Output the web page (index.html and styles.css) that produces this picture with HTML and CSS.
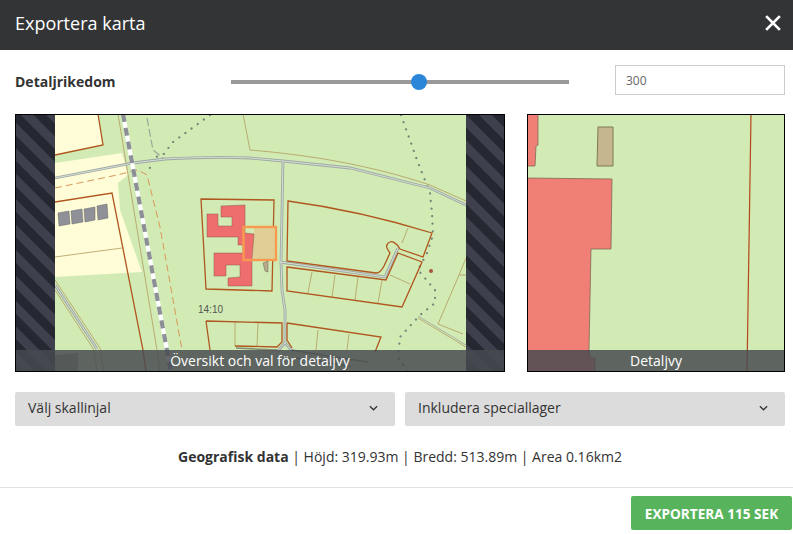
FILE: index.html
```html
<!DOCTYPE html>
<html lang="sv">
<head>
<meta charset="utf-8">
<title>Exportera karta</title>
<link rel="stylesheet" href="styles.css">
</head>
<body>
<div class="modal">
  <header class="head">
    <h1 class="title">Exportera karta</h1>
    <svg class="close" viewBox="0 0 14 14"><path d="M1 1L13 13M13 1L1 13"/></svg>
  </header>
  <section class="detail">
    <span class="detail-label">Detaljrikedom</span>
    <div class="slider"><span class="thumb"></span></div>
    <input class="detail-input" value="300">
  </section>
  <section class="maps">
    <figure class="map map-main">
      <svg class="map-svg" viewBox="15 114 490 258">
        <defs>
          <pattern id="hatch" width="18" height="18" patternUnits="userSpaceOnUse" patternTransform="rotate(45) translate(0 12.6)">
            <rect width="18" height="18" fill="#3e404d"/>
            <rect width="18" height="9" fill="#262831"/>
          </pattern>
        </defs>
        <rect x="15" y="114" width="490" height="258" fill="#d2ebb4"/>
        <g class="cream">
          <path d="M55 114H98L103 145L55 155Z"/>
          <path d="M55 163L122 153L128 175L118 183L120 210L142 272L55 277Z"/>
        </g>
        <g class="thin">
          <path d="M55 257L122 248"/>
          <path d="M312 272L308 293M335 275L332 297M358 277L355 300M382 280L378 303M390 275L410 284M408 228L402 243"/>
          <path d="M235 322L235 346M258 323L257 347M318 330L316 350M349 334L347 350"/>
          <path d="M466 258L459 275L438 324L463 334M459 275H466"/>
          <path d="M118 114L157 350L160 372"/>
          <path d="M243 114L250 150C310 155 370 165 430 185L466 201"/>
          <path d="M55 280L100 348L104 372M55 290L94 350L97 372"/>
          <path d="M418 318L466 347"/>
        </g>
        <path class="dash-orange" d="M55 188L117 175L138 170L147 175L160 227L182 350"/>
        <path class="dash-grey" d="M147 118L153 150L163 158"/>
        <path class="dots" d="M401 115L417 160L430 193L432 213L433 235L427 253L418 270L435 290L435 303L420 315L400 337L398 357L408 372"/>
        <path class="dots" d="M210 115L173 142L163 155L152 158L149 172"/>
        <g class="road">
          <path d="M55 178L133 163L165 159C200 157 230 157 250 158L283 161L350 168L430 188L466 205"/>
          <path d="M283 161L281 262L282 290L285 310L285 343"/>
          <path d="M280 262L385 277L398 248"/>
          <path d="M55 285L97 349"/>
          <path d="M285 343L277 352M285 343L293 352"/>
        </g>
        <g class="road-core">
          <path d="M55 178L133 163L165 159C200 157 230 157 250 158L283 161L350 168L430 188L466 205"/>
          <path d="M283 161L281 262L282 290L285 310L285 343"/>
          <path d="M280 262L385 277L398 248"/>
          <path d="M55 285L97 349"/>
          <path d="M285 343L277 352M285 343L293 352"/>
        </g>
        <path class="road-thin" d="M418 316L466 345"/>
        <g class="lot">
          <path d="M55 155L103 145L98 114"/>
          <path d="M55 202L112 193L143 350L146 372"/>
          <path d="M201 199L274 200L272 291L206 289Z"/>
          <path d="M288 201C340 208 390 220 432 233L423 257L400 249C397 243 392 241 390 242C387 243 386 246 387 248C388 250 389 252 390 253L384 266C382 270 380 273 376 273L287 261Z"/>
          <path d="M287 267L386 280L398 253L422 262L402 307L287 291Z"/>
          <path d="M206 321L282 323L282 342L277 347L235 346M206 321L210 350"/>
          <path d="M287 323L381 337L375 352M287 323L287 340L292 348"/>
        </g>
        <path class="rail-base" d="M123 114L171 372"/>
        <path class="rail-dash" d="M123 114L171 372"/>
        <g class="shed">
          <path d="M58 213L69 211L70 224L59 226Z"/>
          <path d="M71 211L82 209L83 222L72 224Z"/>
          <path d="M84 209L95 207L95 220L85 222Z"/>
          <path d="M97 206L107 204L108 218L98 220Z"/>
        </g>
        <path class="tan" d="M254 227H275V260H253Z"/>
        <path class="house" d="M221 206L245 205L245 233L254 234L252 260L252 286L228 286L228 278L240 277L240 265L226 265L226 276L214 276L214 253L243 253L243 245L238 245L238 237L207 237L207 214L218 214L218 226L232 226L232 217L221 217Z"/>
        <rect class="view" x="243.500" y="227" width="32.500" height="33"/>
        <path class="tan tan-small" d="M263 263L268 261L268 272L265 271Z"/>
        <circle class="pin" cx="431" cy="271" r="2"/>
        <text class="map-label" x="198" y="313">14:10</text>
        <rect x="16" y="114" width="39" height="258" fill="url(#hatch)"/>
        <rect x="466" y="114" width="38" height="258" fill="url(#hatch)"/>
        <path class="ghost" d="M55 355L78 353V372H55Z"/>
        <path class="ghost-line" d="M236 348L277 350M292 350L340 358L368 362M296 358L350 366"/>
      </svg>
      <figcaption class="caption">Översikt och val för detaljvy</figcaption>
    </figure>
    <figure class="map map-side">
      <svg class="map-svg" viewBox="527 114 258 258">
        <rect x="527" y="114" width="258" height="258" fill="#d2ebb4"/>
        <path class="house2" d="M527 113H538L538 145L536 146L535 166H527Z"/>
        <path class="house2" d="M527 178L612 179L611 249L591 249L589 350L590 358L595 358L595 373H527Z"/>
        <path class="tan2" d="M598 127H613L613 166H597Z"/>
        <path class="line2" d="M751 114L747 372"/>
      </svg>
      <figcaption class="caption">Detaljvy</figcaption>
    </figure>
  </section>
  <section class="selects">
    <div class="select"><span>Välj skallinjal</span><svg class="chev" viewBox="0 0 10 6"><path d="M1 1L5 5L9 1"/></svg></div>
    <div class="select"><span>Inkludera speciallager</span><svg class="chev" viewBox="0 0 10 6"><path d="M1 1L5 5L9 1"/></svg></div>
  </section>
  <p class="geo"><strong>Geografisk data</strong> | Höjd: 319.93m | Bredd: 513.89m | Area 0.16km2</p>
  <footer class="foot">
    <button class="export">EXPORTERA 115 SEK</button>
  </footer>
</div>
</body>
</html>
```
FILE: styles.css
```css
* { box-sizing: border-box; }
html, body { margin: 0; height: 100%; background: #fff; overflow: hidden; }
body { font-family: "Open Sans", "Liberation Sans", sans-serif; color: #333; }
.modal { width: 793px; height: 534px; display: flex; flex-direction: column; }
.head { height: 50px; flex: none; background: #333436; display: flex; align-items: center; justify-content: space-between; padding: 0 12px 5px 15px; }
.title { margin: 0; color: #fff; font-size: 18px; font-weight: 400; }
.close { width: 16px; height: 16px; }
.close path { fill: none; stroke: #fff; stroke-width: 2.400; }
.detail { height: 64px; flex: none; display: flex; align-items: center; padding: 0 8px 0 15px; }
.detail-label { width: 216px; font-size: 14px; font-weight: 700; margin-bottom: 2px; }
.slider { width: 338px; height: 4px; background: #999; position: relative; }
.thumb { position: absolute; left: 180px; top: -6px; width: 16px; height: 16px; border-radius: 50%; background: #2b86da; }
.detail-input { width: 170px; height: 30px; margin: 0 0 4px 46px; border: 1px solid #ccc; padding: 0 10px; font: 12px "Open Sans", sans-serif; color: #666; outline: none; }
.maps { display: flex; gap: 22px; padding: 0 8px 0 15px; flex: none; }
.map { margin: 0; height: 258px; position: relative; outline: 1px solid #000; outline-offset: -1px; overflow: hidden; }
.map-main { width: 490px; }
.map-side { width: 258px; }
.map-svg { display: block; width: 100%; height: 100%; }
.caption { position: absolute; left: 1px; right: 1px; bottom: 1px; height: 21px; background: rgba(72, 74, 80, .84); color: #fff; font-size: 14px; line-height: 21px; text-align: center; }
.cream path { fill: #fffcd8; }
.lot path { fill: none; stroke: #b0561f; stroke-width: 1.300; }
.thin path { fill: none; stroke: #b39a5e; stroke-width: .800; }
.dash-orange { fill: none; stroke: #d9975a; stroke-width: 1; stroke-dasharray: 7 4; }
.dash-grey { fill: none; stroke: #9aa89a; stroke-width: 1.200; stroke-dasharray: 8 3; }
.dots { fill: none; stroke: #758577; stroke-width: 2.200; stroke-linecap: round; stroke-dasharray: .1 7.500; }
.road path { fill: none; stroke: #9fa8a6; stroke-width: 2.800; }
.road-core path { fill: none; stroke: #d3e0d0; stroke-width: 1; }
.road-thin { fill: none; stroke: #a7b0a6; stroke-width: 1; }
.rail-base { fill: none; stroke: #fff; stroke-width: 4.200; }
.rail-dash { fill: none; stroke: #8c8f96; stroke-width: 4.200; stroke-dasharray: 8 6; }
.shed path { fill: #8f9098; stroke: #666; stroke-width: .500; }
.house { fill: #ee6d6d; stroke: #8a5a4a; stroke-width: .500; }
.view { fill: none; stroke: #f79a4f; stroke-width: 2.400; }
.tan { fill: #e0cf95; }
.tan-small { fill: #b9a987; stroke: #666; stroke-width: .500; }
.pin { fill: #a6553f; }
.map-label { font: 10px "Liberation Sans", sans-serif; fill: #555; }
.ghost { fill: #4a3f3f; opacity: .4; }
.ghost-line { fill: none; stroke: #333; stroke-width: 1.500; opacity: .5; }
.house2 { fill: #f07f75; stroke: #7d6a55; stroke-width: .800; }
.tan2 { fill: #c6b68e; stroke: #7d7a55; stroke-width: 1; }
.line2 { fill: none; stroke: #b5461c; stroke-width: 1.200; }
.selects { display: flex; gap: 10px; padding: 20px 8px 0 15px; flex: none; }
.select { width: 380px; height: 34px; background: #dcdcdc; border-radius: 2px; display: flex; align-items: center; justify-content: space-between; padding: 0 17px 3px 13px; font-size: 14px; }
.chev { width: 9px; height: 6px; }
.chev path { fill: none; stroke: #333; stroke-width: 1.400; }
.geo { margin: 0; height: 61px; flex: none; padding: 20px 0 0 7px; line-height: 22px; font-size: 14px; text-align: center; }
.foot { border-top: 1px solid #e2e2e2; padding: 8px 1px 0 0; display: flex; justify-content: flex-end; flex: none; }
.export { width: 161px; height: 34px; border: 0; border-radius: 2px; background: #57b45c; color: #fff; font: 700 13.600px "Open Sans", sans-serif; padding: 0; }
```
